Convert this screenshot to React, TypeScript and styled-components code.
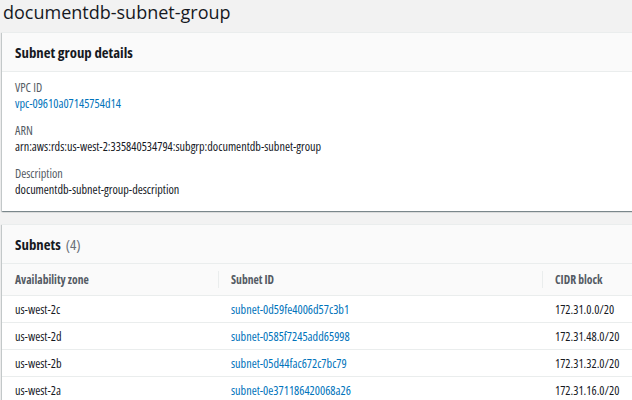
import React from "react";
import styled, { createGlobalStyle } from "styled-components";

const Global = createGlobalStyle`
  html, body { margin: 0; padding: 0; background: #f2f2f2; overflow: hidden; }
  body { font-family: "Open Sans", "Noto Sans", sans-serif; font-stretch: 75%; color: #16191f; }
`;

const Page = styled.div`
  width: 632px;
  height: 400px;
  overflow: hidden;
  padding: 0 0 0 2px;
  box-sizing: border-box;
`;

const Title = styled.h1`
  margin: 0 0 7px 1px;
  font-size: 18px;
  line-height: 25px;
  font-stretch: 100%;
  font-weight: 400;
  color: #16191f;
`;

const Card = styled.section<{ $gap?: number }>`
  width: 680px;
  background: #fff;
  margin-top: ${(p) => p.$gap ?? 0}px;
  box-shadow: 0 1px 1px 0 rgba(0, 28, 36, 0.3), 1px 1px 1px 0 rgba(0, 28, 36, 0.15),
    -1px 1px 1px 0 rgba(0, 28, 36, 0.15);
  border-top: 1px solid #eaeded;
`;

const CardHeader = styled.div`
  height: 38px;
  background: #fafafa;
  border-bottom: 1px solid #eaeded;
  display: flex;
  align-items: center;
  padding: 0 13px;
  font-size: 14.8px;
  font-weight: 700;
  color: #16191f;
`;

const Counter = styled.span`
  font-weight: 400;
  color: #687078;
  margin-left: 5px;
`;

const Details = styled.div`
  padding: 8px 13px 13px;
  display: flex;
  flex-direction: column;
  gap: 11px;
`;

const Field = styled.div`
  display: flex;
  flex-direction: column;
  font-size: 12.2px;
  line-height: 16px;
`;

const Label = styled.div`
  color: #545b64;
`;

const Value = styled.div`
  color: #16191f;
`;

const Link = styled.a`
  color: #0073bb;
  text-decoration: none;
`;

const Table = styled.div`
  display: grid;
  grid-template-columns: 216px 324px 1fr;
  font-size: 12.2px;
`;

const HeadCell = styled.div<{ $divider?: boolean }>`
  height: 31px;
  background: #fafafa;
  border-bottom: 1px solid #eaeded;
  display: flex;
  align-items: center;
  padding-left: 13px;
  font-size: 11.6px;
  font-weight: 700;
  color: #545b64;
  position: relative;
  ${(p) =>
    p.$divider
      ? `&::before { content: ""; position: absolute; left: 0; top: 7px; bottom: 7px; width: 1px; background: #eaeded; }`
      : ""}
`;

const Cell = styled.div`
  height: 26px;
  border-bottom: 1px solid #eaeded;
  display: flex;
  align-items: center;
  padding-left: 13px;
  color: #16191f;
`;

const rows = [
  ["us-west-2c", "subnet-0d59fe4006d57c3b1", "172.31.0.0/20"],
  ["us-west-2d", "subnet-0585f7245add65998", "172.31.48.0/20"],
  ["us-west-2b", "subnet-05d44fac672c7bc79", "172.31.32.0/20"],
  ["us-west-2a", "subnet-0e371186420068a26", "172.31.16.0/20"],
];

export default function App() {
  return (
    <Page>
      <Global />
      <Title>documentdb-subnet-group</Title>
      <Card>
        <CardHeader>Subnet group details</CardHeader>
        <Details>
          <Field>
            <Label>VPC ID</Label>
            <Link href="#">vpc-09610a07145754d14</Link>
          </Field>
          <Field>
            <Label>ARN</Label>
            <Value>arn:aws:rds:us-west-2:335840534794:subgrp:documentdb-subnet-group</Value>
          </Field>
          <Field>
            <Label>Description</Label>
            <Value>documentdb-subnet-group-description</Value>
          </Field>
        </Details>
      </Card>
      <Card $gap={13}>
        <CardHeader>
          Subnets<Counter>(4)</Counter>
        </CardHeader>
        <Table>
          <HeadCell>Availability zone</HeadCell>
          <HeadCell $divider>Subnet ID</HeadCell>
          <HeadCell $divider>CIDR block</HeadCell>
          {rows.map((r) => (
            <React.Fragment key={r[1]}>
              <Cell>{r[0]}</Cell>
              <Cell>
                <Link href="#">{r[1]}</Link>
              </Cell>
              <Cell>{r[2]}</Cell>
            </React.Fragment>
          ))}
        </Table>
      </Card>
    </Page>
  );
}
